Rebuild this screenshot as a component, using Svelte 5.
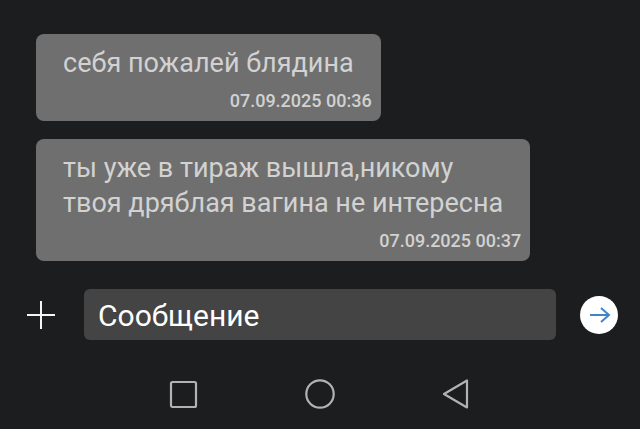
<script lang="ts">
    type Message = { id: number, text: string, sentAt: string };

    let messages: Message[] = $state([
        { id: 1, text: "себя пожалей блядина", sentAt: "07.09.2025 00:36" },
        { id: 2, text: "ты уже в тираж вышла,никому\nтвоя дряблая вагина не интересна", sentAt: "07.09.2025 00:37" },
    ]);
    let draft = $state("");

    const pad = (n: number) => String(n).padStart(2, "0");

    const formatDate = (d: Date) =>
        `${pad(d.getDate())}.${pad(d.getMonth() + 1)}.${d.getFullYear()} ${pad(d.getHours())}:${pad(d.getMinutes())}`;

    const send = (e: SubmitEvent) => {
        e.preventDefault();
        if (!draft.trim()) return;
        messages.push({ id: messages.length + 1, text: draft, sentAt: formatDate(new Date()) });
        draft = "";
    };
</script>

<div class="chat">
    <main class="messages">
        {#each messages as message (message.id)}
            <article class="bubble">
                <p>{message.text}</p>
                <time>{message.sentAt}</time>
            </article>
        {/each}
    </main>

    <form class="composer" onsubmit={send}>
        <button type="button" class="attach" aria-label="Прикрепить">
            <svg viewBox="0 0 30 30" width="30" height="30">
                <path d="M15 1v28M1 15h28" stroke="#f4f4f4" stroke-width="2" />
            </svg>
        </button>
        <input type="text" bind:value={draft} placeholder="Сообщение" aria-label="Сообщение" />
        <button type="submit" class="send" aria-label="Отправить">
            <svg viewBox="0 0 38 38" width="38" height="38" fill="none">
                <path d="M10 19h19M21 12l8 7-8 7" stroke="#3f86c6" stroke-width="2" />
            </svg>
        </button>
    </form>

    <nav class="system-nav">
        <button aria-label="Недавние">
            <svg viewBox="0 0 30 30" width="30" height="30">
                <rect x="2" y="3" width="25" height="25" rx="1.5" />
            </svg>
        </button>
        <button aria-label="Домой">
            <svg viewBox="0 0 30 30" width="30" height="30">
                <circle cx="15" cy="15" r="13.7" />
            </svg>
        </button>
        <button aria-label="Назад">
            <svg viewBox="0 0 30 30" width="30" height="30">
                <path d="M3 15L26 1.5V28.5Z" />
            </svg>
        </button>
    </nav>
</div>

<style>
    :global(body) {
        background: #1c1d1f;
    }

    .chat {
        font-family: Roboto, "Liberation Sans", sans-serif;
        background: #1c1d1f;
    }

    .messages {
        display: flex;
        flex-direction: column;
        align-items: flex-start;
        gap: 18px;
        padding: 34px 36px 28px;
    }

    .bubble {
        display: flex;
        flex-direction: column;
        padding: 12px 9px 8px 27px;
        border-radius: 8px;
        background: #6f6f6f;
    }

    .bubble p {
        margin: 0 18px 8px 0;
        font-size: 27px;
        line-height: 35px;
        color: #d2d2d2;
        white-space: pre-line;
    }

    .bubble time {
        align-self: flex-end;
        font-size: 18px;
        line-height: 24px;
        font-weight: 500;
        color: #d2d2d2;
    }

    button {
        display: flex;
        align-items: center;
        justify-content: center;
        flex: none;
        padding: 0;
        border: 0;
        background: none;
    }

    .composer {
        display: flex;
        align-items: center;
        gap: 24px;
        padding: 0 22px 0 26px;
    }

    .attach {
        width: 30px;
        height: 30px;
        margin-right: 4px;
    }

    .composer input {
        flex: 1;
        min-width: 0;
        height: 51px;
        box-sizing: border-box;
        padding: 2px 14px 0;
        border: 0;
        border-radius: 6px;
        outline: 0;
        background: #444444;
        font-family: inherit;
        font-size: 30px;
        color: #ffffff;
    }

    .composer input::placeholder {
        color: #ffffff;
        opacity: 1;
    }

    .send {
        width: 38px;
        height: 38px;
        border-radius: 50%;
        background: #ffffff;
    }

    .system-nav {
        display: flex;
        justify-content: center;
        gap: 96px;
        padding: 34px 0 15px;
    }

    .system-nav button {
        width: 40px;
        height: 40px;
    }

    .system-nav svg {
        fill: none;
        stroke: #b2b2b3;
        stroke-width: 2.2;
        stroke-linejoin: round;
    }
</style>
